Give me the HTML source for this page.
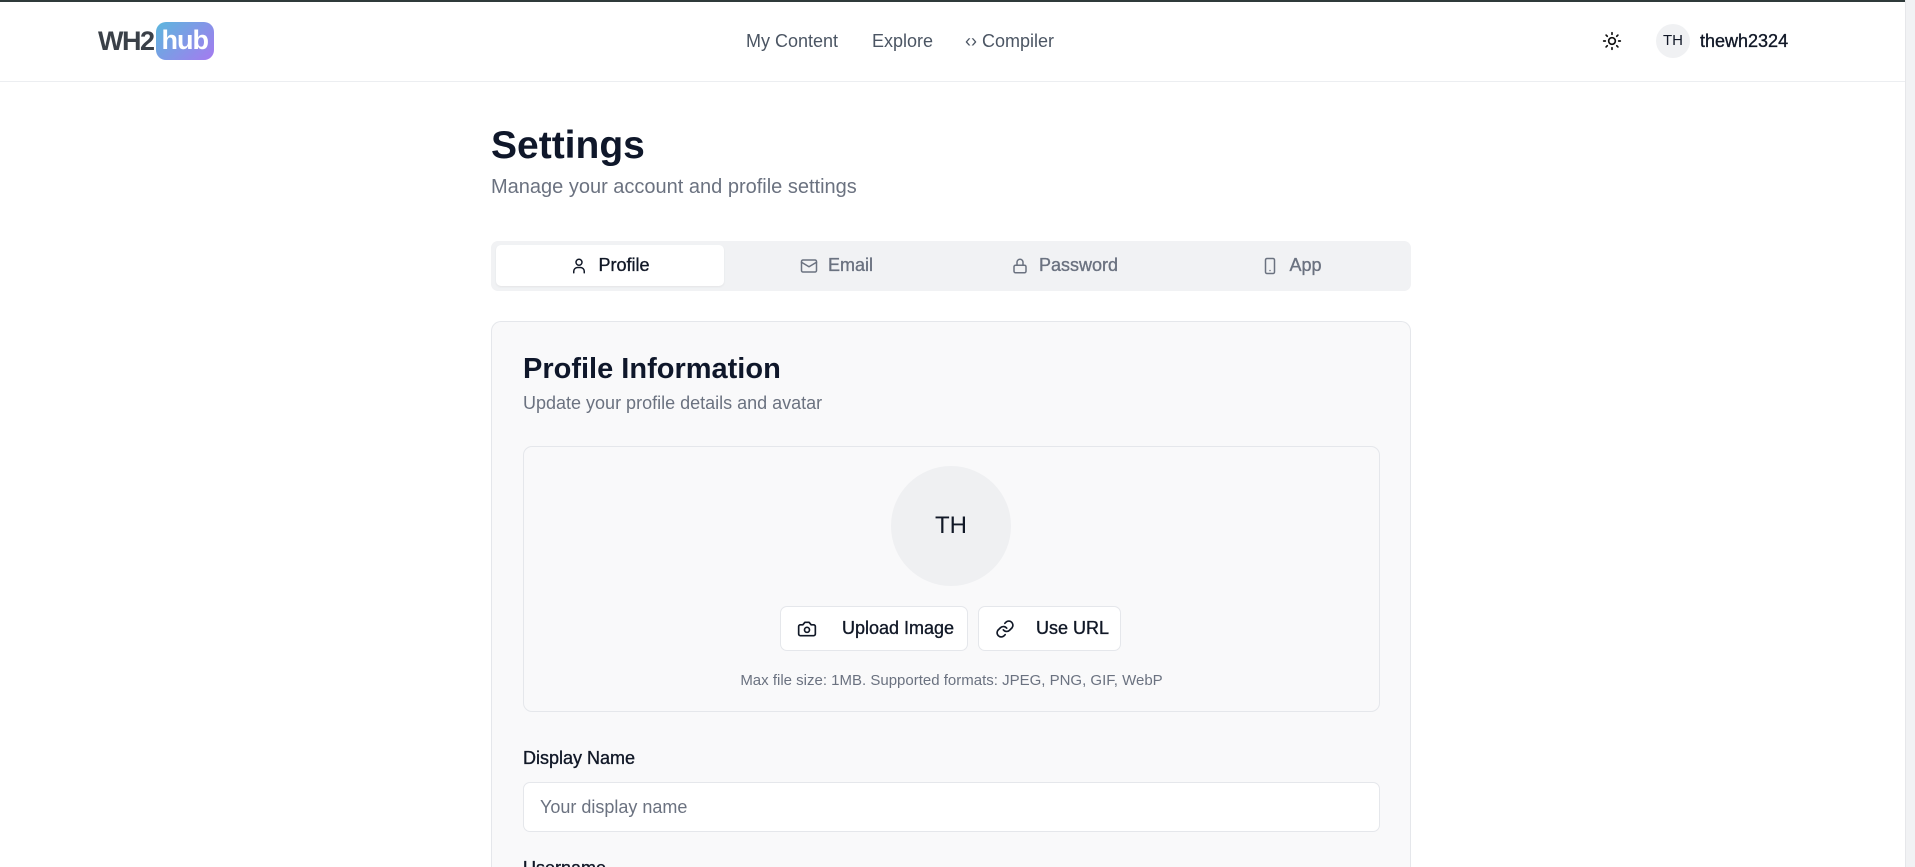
<!DOCTYPE html>
<html style="width:1915px;height:867px;overflow:hidden"><head><meta charset="utf-8"><style>
*{box-sizing:border-box;margin:0;padding:0}
body{width:1915px;height:867px;overflow:hidden;background:#fff;font-family:"Liberation Sans",sans-serif;color:#0f172a}
#w{position:relative;width:1915px;height:867px;overflow:hidden}
.a{position:absolute}
.m{-webkit-text-stroke:0.35px currentColor}
.hdr{left:0;top:0;width:1905px;height:82px;border-top:2px solid #2f3a3a;border-bottom:1px solid #eceef1;background:#fff}
.nav{font-size:18px;color:#4b5563;top:31px}
.sb{left:1905px;top:0;width:10px;height:867px;background:#f1f2f4;border-left:1px solid #e6e7ea}
.tab{top:245px;height:41px;width:227px;display:flex;align-items:center;justify-content:center;gap:10px;font-size:18px;color:#6b7280}
.tab svg{width:18px;height:18px;fill:none;stroke:currentColor;stroke-width:2;stroke-linecap:round;stroke-linejoin:round}
.btn{top:606px;height:45px;background:#fff;border:1px solid #e5e7eb;border-radius:7px;display:flex;align-items:center;font-size:18px;color:#111827}
.btn svg{width:20px;height:20px;fill:none;stroke:#111827;stroke-width:2;stroke-linecap:round;stroke-linejoin:round}
</style></head><body><div id="w">
<div class="a hdr"></div>
<div class="a" style="left:98px;top:22px;height:38px;display:flex;align-items:center">
 <span style="font-size:27px;font-weight:bold;color:#3a4048;letter-spacing:-1.5px">WH2</span>
 <span style="margin-left:2px;height:38px;padding:0 6px;border-radius:10px;background:linear-gradient(135deg,#5bb7dd,#a57af0);color:#fff;font-size:27px;font-weight:bold;line-height:36px;letter-spacing:-1px">hub</span>
</div>
<div class="a nav" style="left:746px">My Content</div>
<div class="a nav" style="left:872px">Explore</div>
<div class="a nav" style="left:965px">‹› Compiler</div>
<svg class="a" style="left:1602px;top:31px" width="20" height="20" viewBox="0 0 24 24" fill="none" stroke="#111" stroke-width="2" stroke-linecap="round"><circle cx="12" cy="12" r="4"/><path d="M12 2v2M12 20v2M4.9 4.9l1.4 1.4M17.7 17.7l1.4 1.4M2 12h2M20 12h2M4.9 19.1l1.4-1.4M17.7 6.3l1.4-1.4"/></svg>
<div class="a" style="left:1656px;top:24px;width:34px;height:34px;border-radius:50%;background:#f0f1f3;font-size:15px;line-height:34px;text-align:center;color:#111827">TH</div>
<div class="a m" style="left:1700px;top:31px;font-size:18px;color:#111827">thewh2324</div>
<div class="a sb"></div>

<div class="a" style="left:491px;top:124px;font-size:39px;font-weight:bold;color:#0f172a">Settings</div>
<div class="a" style="left:491px;top:176px;font-size:20px;color:#6b7280">Manage your account and profile settings</div>

<div class="a" style="left:491px;top:241px;width:920px;height:50px;background:#f1f2f4;border-radius:7px"></div>
<div class="a tab m" style="left:496px;width:228px;background:#fff;border-radius:5px;color:#111827;box-shadow:0 1px 2px rgba(0,0,0,.06)"><svg viewBox="0 0 24 24"><circle cx="12" cy="7" r="4"/><path d="M5 21v-2a5 5 0 0 1 5-5h4a5 5 0 0 1 5 5v2"/></svg>Profile</div>
<div class="a tab m" style="left:723px"><svg viewBox="0 0 24 24"><rect x="2" y="4" width="20" height="16" rx="2"/><path d="M22 7l-10 6L2 7"/></svg>Email</div>
<div class="a tab m" style="left:951px"><svg viewBox="0 0 24 24"><rect x="4" y="11" width="16" height="10" rx="2"/><path d="M8 11V7a4 4 0 0 1 8 0v4"/></svg>Password</div>
<div class="a tab m" style="left:1178px"><svg viewBox="0 0 24 24"><rect x="6" y="2" width="12" height="20" rx="2"/><path d="M12 18h.01"/></svg>App</div>

<div class="a" style="left:491px;top:321px;width:920px;height:546px;background:#f9f9fa;border:1px solid #e5e7eb;border-bottom:0;border-radius:10px 10px 0 0"></div>
<div class="a" style="left:523px;top:353px;font-size:29px;font-weight:bold;color:#0f172a">Profile Information</div>
<div class="a" style="left:523px;top:393px;font-size:18px;color:#6b7280">Update your profile details and avatar</div>
<div class="a" style="left:523px;top:446px;width:857px;height:266px;border:1px solid #e5e7eb;border-radius:9px;background:#f9f9fa"></div>
<div class="a" style="left:891px;top:466px;width:120px;height:120px;border-radius:50%;background:#eff0f2;font-size:24px;line-height:120px;text-align:center;color:#111827">TH</div>
<div class="a btn m" style="left:780px;width:188px"><svg style="margin-left:16px" viewBox="0 0 24 24"><path d="M14.5 4h-5L7 7H4a2 2 0 0 0-2 2v9a2 2 0 0 0 2 2h16a2 2 0 0 0 2-2V9a2 2 0 0 0-2-2h-3z"/><circle cx="12" cy="13" r="3"/></svg><span style="margin-left:25px">Upload Image</span></div>
<div class="a btn m" style="left:978px;width:143px"><svg style="margin-left:16px" viewBox="0 0 24 24"><path d="M10 13a5 5 0 0 0 7.5.5l3-3a5 5 0 0 0-7-7l-1.7 1.7"/><path d="M14 11a5 5 0 0 0-7.5-.5l-3 3a5 5 0 0 0 7 7l1.7-1.7"/></svg><span style="margin-left:21px">Use URL</span></div>
<div class="a" style="left:523px;width:857px;top:672px;text-align:center;font-size:15px;color:#6b7280">Max file size: 1MB. Supported formats: JPEG, PNG, GIF, WebP</div>
<div class="a m" style="left:523px;top:748px;font-size:18px;color:#111827">Display Name</div>
<div class="a" style="left:523px;top:782px;width:857px;height:50px;background:#fff;border:1px solid #e5e7eb;border-radius:7px;padding-left:16px;font-size:18px;line-height:48px;color:#6b7280">Your display name</div>
<div class="a m" style="left:523px;top:858px;font-size:18px;color:#111827;line-height:20px">Username</div>
</div></body></html>
